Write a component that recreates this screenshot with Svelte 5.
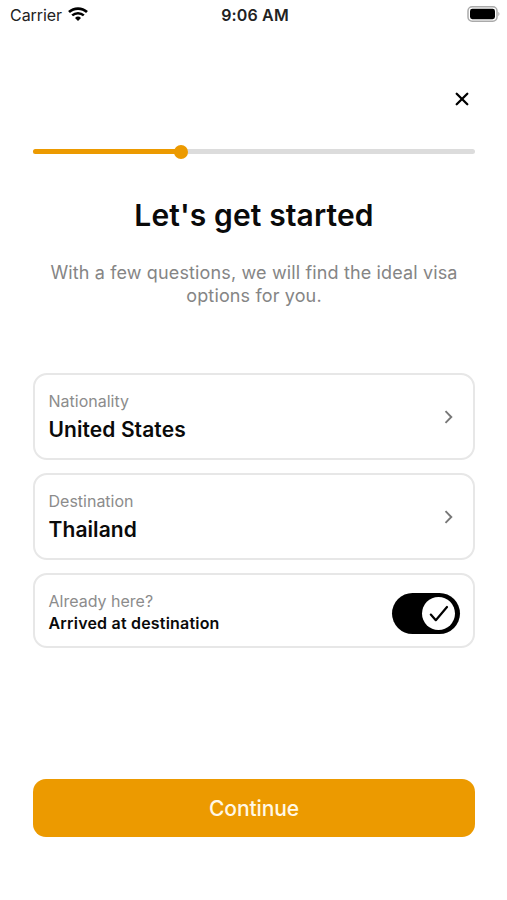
<script lang="ts">
  let progress = 33.5;
  let arrived = true;

  const fields = [
    { label: "Nationality", value: "United States" },
    { label: "Destination", value: "Thailand" },
  ];
</script>

<div class="screen">
  <header class="status">
    <div class="carrier">
      <span>Carrier</span>
      <svg width="20" height="14" viewBox="0 0 20 14" fill="none" stroke="#000">
        <path d="M1 5.1a13.2 13.2 0 0 1 18 0" stroke-width="2.7" />
        <path d="M4.2 8.4a8.6 8.6 0 0 1 11.6 0" stroke-width="2.5" />
        <path d="M10 14 7 11a4.3 4.3 0 0 1 6 0z" fill="#000" stroke="none" />
      </svg>
    </div>
    <span class="time">9:06 AM</span>
    <svg class="battery" width="33" height="16" viewBox="0 0 33 16">
      <rect x="1" y="0.8" width="29" height="14.4" rx="4.2" fill="#fff" stroke="#aaa" stroke-width="1.5" />
      <rect x="3" y="2.8" width="25" height="10.4" rx="2.4" fill="#000" />
      <path d="M31.3 5.8q2.4 2.2 0 4.4z" fill="#aaa" />
    </svg>
  </header>

  <div class="toolbar">
    <button class="close" aria-label="Close">
      <svg width="14" height="14" viewBox="0 0 14 14" fill="none" stroke="#000" stroke-width="2.3" stroke-linecap="round">
        <path d="M1.7 1.7l10.6 10.6M12.3 1.7L1.7 12.3" />
      </svg>
    </button>
  </div>

  <div class="track">
    <div class="bar" style="width: {progress}%"></div>
    <div class="thumb"></div>
  </div>

  <h1>Let's get started</h1>
  <p class="intro">With a few questions, we will find the ideal visa options for you.</p>

  <div class="cards">
    {#each fields as field}
      <button class="card">
        <span class="text">
          <span class="label">{field.label}</span>
          <span class="value">{field.value}</span>
        </span>
        <svg class="chevron" width="9" height="14" viewBox="0 0 9 14" fill="none" stroke="#777" stroke-width="1.9">
          <path d="M1.5 1.2 7.3 7l-5.8 5.8" />
        </svg>
      </button>
    {/each}

    <div class="card small">
      <span class="text">
        <span class="label">Already here?</span>
        <span class="value">Arrived at destination</span>
      </span>
      <button
        class="toggle"
        class:on={arrived}
        role="switch"
        aria-checked={arrived}
        aria-label="Arrived at destination"
        on:click={() => (arrived = !arrived)}
      >
        <span class="knob">
          <svg width="20" height="18" viewBox="0 0 20 18" fill="none" stroke="#000" stroke-width="2.2" stroke-linecap="round" stroke-linejoin="round">
            <path d="M1.8 9.6l5 5.6L18 2" />
          </svg>
        </span>
      </button>
    </div>
  </div>

  <button class="continue">Continue</button>
</div>

<style>
  :global(body) {
    margin: 0;
    background: #fff;
  }

  .screen {
    box-sizing: border-box;
    height: 900px;
    padding: 0 32px 0 33px;
    display: flex;
    flex-direction: column;
    font-family: Inter, "Liberation Sans", sans-serif;
    color: #0a0a0a;
    background: #fff;
  }

  button {
    font-family: inherit;
    color: inherit;
    border: none;
    padding: 0;
    background: none;
    cursor: pointer;
  }

  svg {
    display: block;
  }

  .status {
    display: grid;
    grid-template-columns: 1fr auto 1fr;
    align-items: center;
    height: 28px;
    margin: 0 -25px 0 -23px;
    font-size: 16px;
    line-height: 28px;
  }

  .carrier {
    display: flex;
    align-items: center;
    gap: 6px;
    color: #222;
  }

  .carrier svg {
    margin-bottom: 1px;
  }

  .carrier span,
  .time {
    padding-top: 1px;
  }

  .carrier span {
    letter-spacing: -0.05px;
  }

  .time {
    font-weight: 600;
    letter-spacing: 0.15px;
    color: #222;
  }

  .battery {
    justify-self: end;
    margin-bottom: 2px;
  }

  .toolbar {
    display: flex;
    justify-content: flex-end;
    height: 121px;
  }

  .close {
    align-self: flex-start;
    margin: 64px 6px 0 0;
  }

  .track {
    display: flex;
    flex-shrink: 0;
    align-items: center;
    height: 5px;
    border-radius: 3px;
    background: #dcdcdc;
  }

  .bar {
    height: 5px;
    border-radius: 3px;
    background: #ec9a00;
  }

  .thumb {
    width: 14px;
    height: 14px;
    margin-left: -7px;
    border-radius: 50%;
    background: #ec9a00;
  }

  h1 {
    margin: 41px 0 0;
    font-size: 30px;
    line-height: 40px;
    font-weight: 600;
    letter-spacing: 0.12px;
    text-align: center;
  }

  .intro {
    margin: 26px 0 0;
    font-size: 18px;
    line-height: 23px;
    letter-spacing: 0.14px;
    text-align: center;
    color: #858585;
  }

  .cards {
    display: flex;
    flex-direction: column;
    gap: 13px;
    margin-top: 66px;
  }

  .card {
    box-sizing: border-box;
    display: flex;
    align-items: center;
    justify-content: space-between;
    height: 87px;
    padding: 0 20px 0 13.5px;
    border: 2px solid #e7e7e7;
    border-radius: 14px;
    text-align: left;
  }

  .card.small {
    height: 75px;
    padding-right: 13px;
  }

  .text {
    display: flex;
    flex-direction: column;
    padding-top: 4px;
  }

  .small .text {
    padding-top: 2px;
  }

  .label {
    font-size: 16px;
    line-height: 22px;
    color: #8c8c8c;
  }

  .value {
    font-size: 21px;
    line-height: 36px;
    font-weight: 600;
    letter-spacing: 0.08px;
  }

  .small .value {
    font-size: 16px;
    line-height: 22px;
    letter-spacing: 0.2px;
  }

  .toggle {
    box-sizing: border-box;
    display: flex;
    width: 68px;
    height: 41px;
    padding: 4px 5px 4px 4px;
    margin-top: 6px;
    border-radius: 21px;
    background: #ccc;
  }

  .toggle.on {
    justify-content: flex-end;
    background: #000;
  }

  .knob {
    display: flex;
    align-items: center;
    justify-content: center;
    width: 33px;
    height: 33px;
    border-radius: 50%;
    background: #fff;
  }

  .continue {
    height: 58px;
    margin-top: 131px;
    border-radius: 13px;
    font-size: 21px;
    font-weight: 500;
    letter-spacing: -0.1px;
    color: #fff8e6;
    background: #ec9a00;
  }
</style>
